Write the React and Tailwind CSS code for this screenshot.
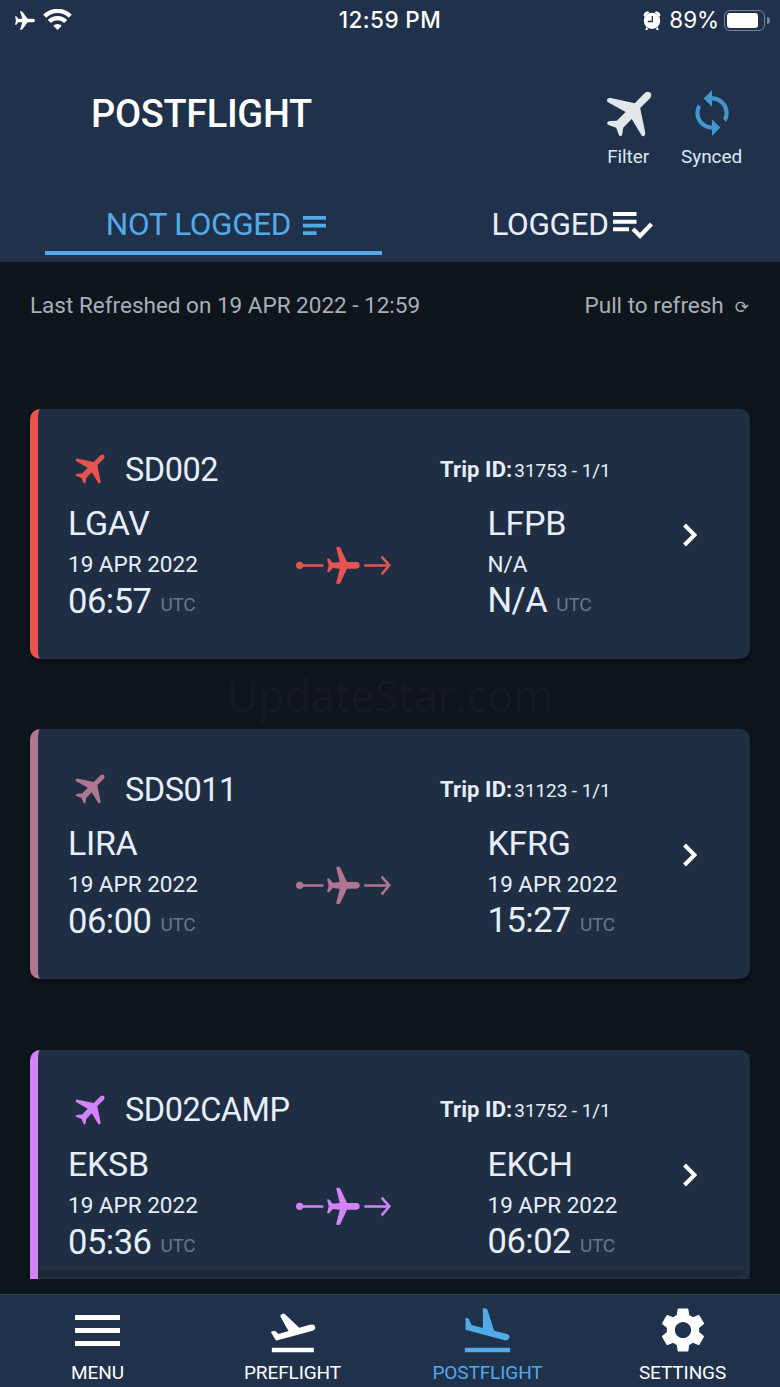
import { MdSettings, MdSync } from "react-icons/md";

const flights = [
  {
    id: "SD002",
    trip: "31753 - 1/1",
    border: "border-[#e8534f]",
    color: "text-[#e8534f]",
    from: { code: "LGAV", date: "19 APR 2022", time: "06:57" },
    to: { code: "LFPB", date: "N/A", time: "N/A" },
  },
  {
    id: "SDS011",
    trip: "31123 - 1/1",
    border: "border-[#b0768f]",
    color: "text-[#b0768f]",
    from: { code: "LIRA", date: "19 APR 2022", time: "06:00" },
    to: { code: "KFRG", date: "19 APR 2022", time: "15:27" },
  },
  {
    id: "SD02CAMP",
    trip: "31752 - 1/1",
    border: "border-[#d283f6]",
    color: "text-[#d283f6]",
    from: { code: "EKSB", date: "19 APR 2022", time: "05:36" },
    to: { code: "EKCH", date: "19 APR 2022", time: "06:02" },
  },
];

const PlaneIcon = ({ className }) => (
  <svg viewBox="22 18 136 136" className={className} fill="currentColor">
    <path d="M139 22L107 54 36 39q-8-1-10 3-3 6 2 9l52 29-26 26-20 1q-9 1-9 6 1 4 7 6l20 8 8 20q2 5 5 5 4 0 5-6l3-19 25-26 28 46q4 6 8 4 5-3 4-10l-15-73 30-29q5-9 1-15-7-7-15-2z" />
  </svg>
);

const RouteIcon = ({ className }) => (
  <svg viewBox="827 436 285 117" className={className} fill="currentColor">
    <circle cx="838" cy="494" r="11" />
    <path d="M846 490.500h63v7.500h-63zM1032 490.500h72v7.500h-72z" />
    <path d="M1084 468l23 26-23 27" fill="none" stroke="currentColor" strokeWidth="7.500" />
    <path d="M1008 484h-28l-20-43q-1-3-5-3h-4q-4 0-3 4l10 42-21 2-9-11q-2-2-5-2t-2 4l4 17-4 17q-1 4 2 4t5-2l9-11 21 2-10 42q-1 4 3 4h4q4 0 5-3l20-43h28q10 0 10-10t-10-10z" />
  </svg>
);

const TakeoffIcon = () => (
  <svg viewBox="30 40 137 120" className="h-10 w-[46px]" fill="currentColor">
    <path d="M35 144h126v14H35zM32 97l10-4q2 0 4 2l9 8 30-9-24-43q-2-5 2-6l5-3q4-1 6 1l43 41 32-9q14-3 16 6 2 9-10 13L52 122q-5 2-7-3z" />
  </svg>
);

const LandIcon = () => (
  <svg viewBox="614 22 140 138" className="h-[46px] w-[47px]" fill="currentColor">
    <path d="M616 144h136v14H616zM618 54l10 3 8 19 34 9V25l13 3 21 65 36 9q11 3 10 11-3 11-15 9L618 90z" />
  </svg>
);

const StatusBar = () => (
  <div className="grid h-10 grid-cols-3 items-center font-[Inter] text-white">
    <div className="flex items-center gap-2 pl-[15px]">
      <svg viewBox="0 0 60 56" className="h-[19px] w-5" fill="currentColor">
        <path d="M54 23H38L22 2q-1-2-4-2h-3l7 23H10L4 15H0l3 13-3 13h4l6-8h12l-7 23h3q3 0 4-2l16-21h16q6 0 6-5t-6-5z" />
      </svg>
      <svg viewBox="0 0 86 64" className="mb-[2px] h-[21px] w-[29px]" fill="none" stroke="currentColor" strokeWidth="13">
        <path d="M4 22a55 55 0 0 1 78 0" />
        <path d="M18 38a35 35 0 0 1 50 0" />
        <path d="M43 64L30 51a18 18 0 0 1 26 0z" fill="currentColor" stroke="none" />
      </svg>
    </div>
    <div className="text-center text-[22.500px] font-medium tracking-[0.4px]">12:59 PM</div>
    <div className="flex items-center justify-end pr-[10px]">
      <svg viewBox="0 0 54 58" className="mr-[8px] h-[19px] w-[18px]" fill="currentColor">
        <circle cx="27" cy="30" r="25" />
        <path d="M1 13Q3 3 14 1l5 3L4 18zM53 13Q51 3 40 1l-5 3 15 14zM6 58l4-9 6 5-4 4zM48 58l-4-9-6 5 4 4z" />
        <path d="M28 15v17H14" fill="none" stroke="#20314b" strokeWidth="4" />
      </svg>
      <span className="mr-[5px] text-[22.500px] tracking-[-0.1px]">89%</span>
      <div className="h-[21px] w-[41px] rounded-[6px] border-[1.5px] border-[#77829a] p-[2px]">
        <div className="h-full w-[31px] rounded-[3px] bg-white"></div>
      </div>
      <div className="ml-[2px] h-[7px] w-[3px] rounded-r-full bg-[#77829a]"></div>
    </div>
  </div>
);

const Header = () => (
  <header className="h-[262px] bg-[#20314b]">
    <StatusBar />
    <div className="flex h-[144px] items-start justify-between pr-[38px] pl-[91px]">
      <h1 className="pt-[50px] text-[38px] leading-[48px] font-medium tracking-[-0.35px] text-white">POSTFLIGHT</h1>
      <div className="flex gap-[29px] pt-[51px] text-[19px] tracking-[-0.1px] text-[#dbe8f6]">
        <button className="flex flex-col items-center">
          <PlaneIcon className="ml-[2px] h-[46px] w-[46px] text-[#e3e6eb]" />
          <span className="mt-[7px] leading-[26px]">Filter</span>
        </button>
        <button className="flex flex-col items-center">
          <MdSync className="-mt-[3px] -mb-px h-[50px] w-[50px] text-[#4196cf]" />
          <span className="mt-[7px] leading-[26px]">Synced</span>
        </button>
      </div>
    </div>
    <nav className="flex px-[45px] text-[31.500px] tracking-[-0.35px]">
      <button className="flex h-[71px] w-[337px] items-center justify-center gap-3 border-b-4 border-[#52aae6] pt-[15px] pl-[5px] text-[#52aae6]">
        <span>NOT LOGGED</span>
        <svg viewBox="0 0 23 19" className="h-[19px] w-[23px]" fill="currentColor">
          <path d="M0 0h23v3.7H0zM0 7.7h23v3.7H0zM0 15.3h13.5V19H0z" />
        </svg>
      </button>
      <button className="flex h-[71px] flex-1 items-center justify-center gap-1 pt-[11px] pl-[27px] text-[#e6effa]">
        <span>LOGGED</span>
        <svg viewBox="0 0 40 27" className="h-[27px] w-10 text-white" fill="currentColor">
          <path d="M0 0h23.500v4H0zM0 7.700h23.500v4H0zM0 15.300h16v4H0z" />
          <path d="M20 17l7 7 11.500-12" fill="none" stroke="currentColor" strokeWidth="4.200" />
        </svg>
      </button>
    </nav>
  </header>
);

const Airport = ({ airport, timeClass, utcClass }) => (
  <div className="w-[150px]">
    <div className="text-[34px] leading-[44px] tracking-[-0.3px]">{airport.code}</div>
    <div className="text-[22.500px] leading-[38px]">{airport.date}</div>
    <div className={`flex gap-[9px] ${timeClass}`}>
      <span className="text-[34.500px] leading-[36px] tracking-[-0.5px]">{airport.time}</span>
      <span className={`text-[19px] leading-[28px] tracking-[-0.3px] text-[#68768a] ${utcClass}`}>UTC</span>
    </div>
  </div>
);

const FlightCard = ({ flight }) => (
  <div className={`h-[250px] shrink-0 rounded-[10px] border-l-8 bg-[#202e44] pt-9 pl-[30px] text-[#e6effa] shadow-[0_3px_5px_rgba(0,0,0,0.45)] ${flight.border}`}>
    <div className="flex h-12 items-center">
      <PlaneIcon className={`ml-[7px] h-[30px] w-[30px] ${flight.color}`} />
      <div className="ml-5 w-[315px] pt-[2px] text-[32.500px] tracking-[-0.5px]">{flight.id}</div>
      <div className="flex items-baseline">
        <span className="text-[22px] font-bold tracking-[0.1px]">Trip ID:</span>
        <span className="ml-[2px] text-[19px] tracking-[-0.1px]">{flight.trip}</span>
      </div>
    </div>
    <div className="mt-2 flex">
      <Airport airport={flight.from} timeClass="" utcClass="pt-[8px]" />
      <RouteIcon className={`mt-[45px] ml-[77.500px] h-[39px] w-[95px] ${flight.color}`} />
      <div className="ml-[97px]">
        <Airport airport={flight.to} timeClass="-mt-px" utcClass="pt-[9px]" />
      </div>
      <svg viewBox="0 0 14 24" className="mt-[21.500px] ml-[45px] h-6 w-[14px] text-white" fill="none" stroke="currentColor" strokeWidth="4">
        <path d="M1.500 2l10 10-10 10" />
      </svg>
    </div>
  </div>
);

const tabs = [
  {
    label: "MENU",
    icon: (
      <svg viewBox="0 0 45 31" className="mb-[7px] h-[31px] w-[45px]" fill="currentColor">
        <path d="M0 0h45v5H0zM0 13h45v5H0zM0 26h45v5H0z" />
      </svg>
    ),
  },
  { label: "PREFLIGHT", icon: <TakeoffIcon /> },
  { label: "POSTFLIGHT", icon: <LandIcon />, active: true },
  { label: "SETTINGS", icon: <MdSettings className="-mb-[4px] h-[54px] w-[54px]" /> },
];

const BottomNav = () => (
  <footer className="grid h-[93px] grid-cols-4 border-t border-[#2a3e55] bg-[#20314b]">
    {tabs.map((tab) => (
      <button key={tab.label} className={`flex flex-col items-center ${tab.active ? "text-[#52aae6]" : "text-white"}`}>
        <span className="flex h-[58px] items-end justify-center">{tab.icon}</span>
        <span className="mt-[8px] text-[19px] leading-6 tracking-[-0.1px]">{tab.label}</span>
      </button>
    ))}
  </footer>
);

export default function App() {
  return (
    <div className="flex h-[1387px] w-[780px] flex-col overflow-hidden bg-[#0e151d] font-[Roboto]">
      <Header />
      <main className="mb-[15px] flex h-[1017px] flex-col overflow-hidden px-[30px]">
        <div className="flex h-[147px] shrink-0 items-start justify-between pt-[28px] text-[22.500px] leading-[30px] text-[#a9afb7]">
          <span>Last Refreshed on 19 APR 2022 - 12:59</span>
          <span className="flex h-[30px] items-center gap-[11px] pr-px">
            Pull to refresh
            <span className="pt-1 font-['DejaVu_Sans'] text-[17px]">⟳</span>
          </span>
        </div>
        <div className="relative flex flex-col gap-[70.250px]">
          {flights.map((flight) => (
            <FlightCard key={flight.id} flight={flight} />
          ))}
          {/* watermark between the first two cards */}
          <div className="absolute top-[257px] w-full text-center font-['Open_Sans'] text-[43.200px] leading-[60px] text-[#171a1f]">
            UpdateStar.com
          </div>
          {/* edge of the next layer over the last card */}
          <div className="absolute top-[861px] left-2 h-[7px] w-[706px] rounded-br-[8px] bg-[#14222b]/45"></div>
        </div>
      </main>
      <BottomNav />
    </div>
  );
}
